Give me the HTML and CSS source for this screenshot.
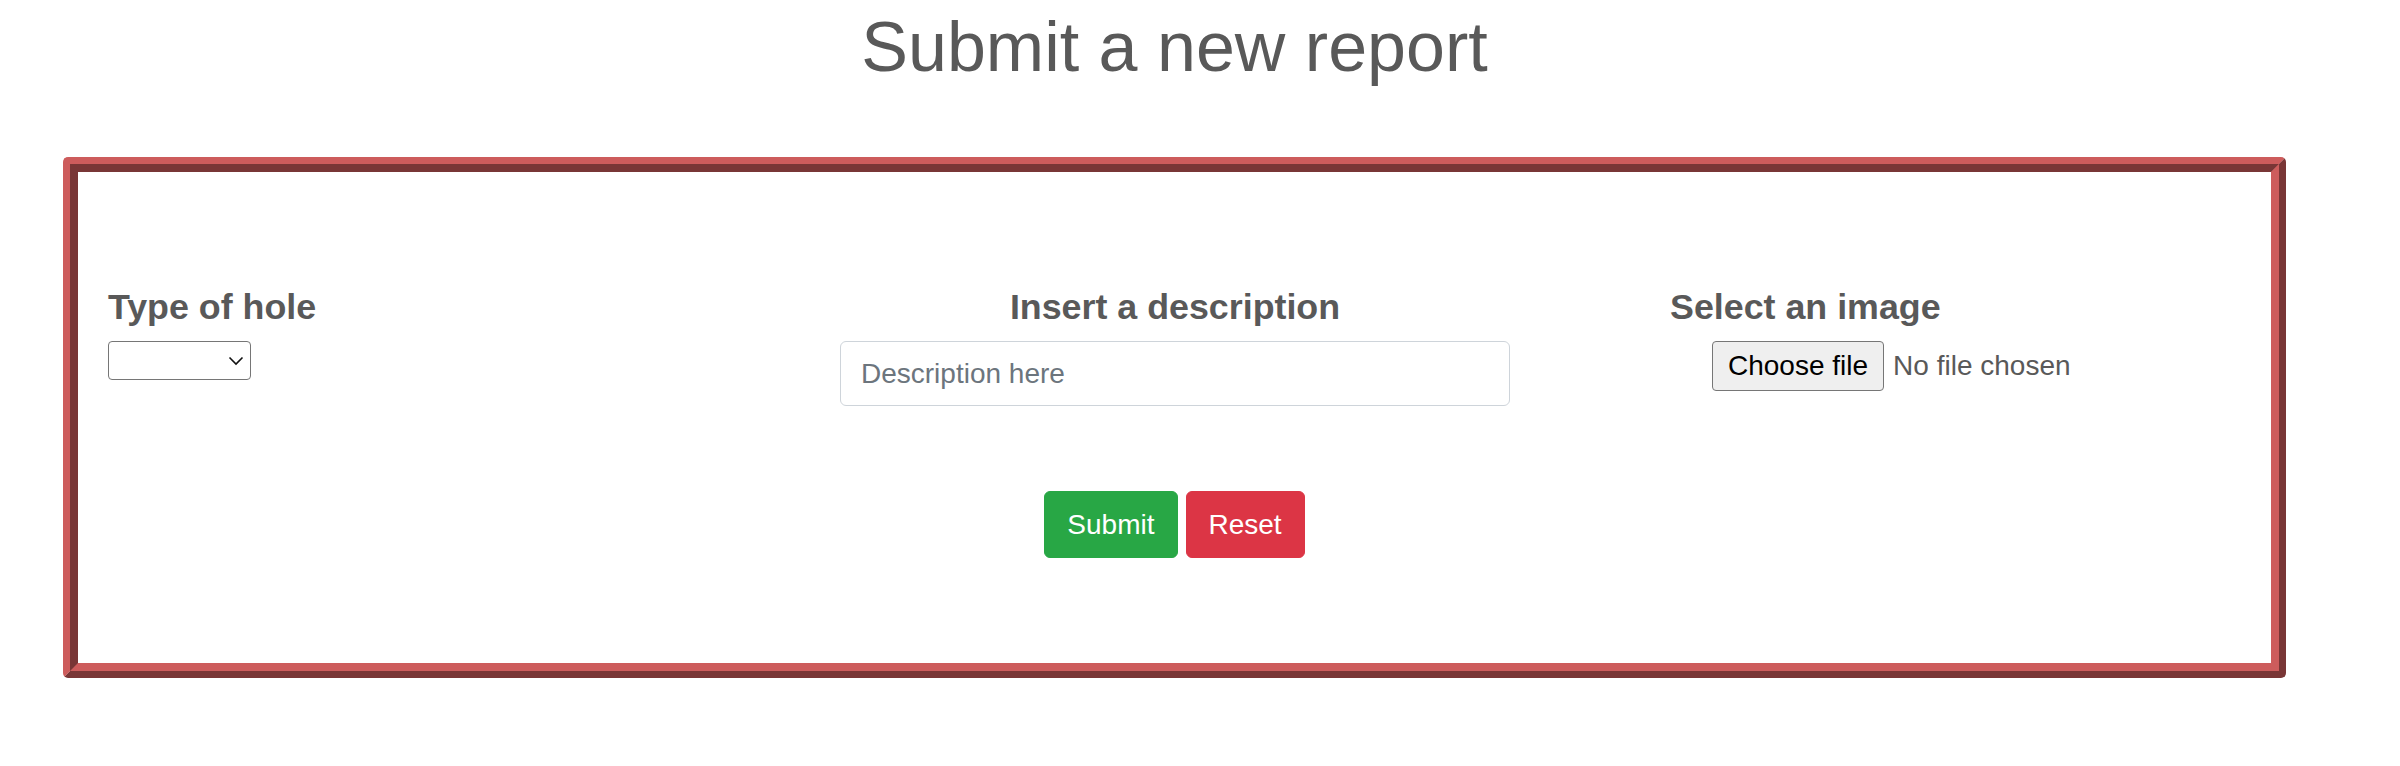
FILE: index.html
```html
<!DOCTYPE html>
<html lang="en">
<head>
<meta charset="utf-8">
<title>Submit a new report</title>
<link rel="stylesheet" href="styles.css">
</head>
<body>
<main class="page">
  <h1 class="title">Submit a new report</h1>
  <form class="report-box">
    <div class="fields">
      <div class="col col-type">
        <h5 class="field-title">Type of hole</h5>
        <span class="select-wrap">
          <select class="select" aria-label="Type of hole">
            <option></option>
          </select>
          <svg class="chevron" width="16" height="10" viewBox="0 0 16 10" aria-hidden="true"><path d="M1.5 1.5 L8 8 L14.5 1.5" fill="none" stroke="#111" stroke-width="1.6"/></svg>
        </span>
      </div>
      <div class="col col-desc">
        <h5 class="field-title center">Insert a description</h5>
        <input class="text-input" type="text" placeholder="Description here">
      </div>
      <div class="col col-image">
        <h5 class="field-title">Select an image</h5>
        <label class="file">
          <input class="file-native" type="file" accept="image/*">
          <span class="file-btn">Choose file</span>
          <span class="file-name">No file chosen</span>
        </label>
      </div>
    </div>
    <div class="actions">
      <button type="submit" class="btn btn-success">Submit</button>
      <button type="reset" class="btn btn-danger">Reset</button>
    </div>
  </form>
</main>
</body>
</html>
```
FILE: styles.css
```css
* { box-sizing: border-box; }

html, body {
  margin: 0;
  padding: 0;
  background: #ffffff;
}

body {
  font-family: "Liberation Sans", Arial, Helvetica, sans-serif;
  color: #595959;
}

.page {
  padding-left: 63px;
  padding-top: 5px;
  width: 2400px;
}

.title {
  width: 2223px;
  margin: 0;
  padding: 0;
  font-size: 70px;
  line-height: 84px;
  font-weight: 400;
  text-align: center;
  color: #595959;
}

.report-box {
  margin: 68px 0 0 0;
  width: 2223px;
  height: 521px;
  border: 15px ridge #cd5c5c;
  border-radius: 5px;
  padding-top: 114px;
}

.fields {
  display: flex;
  align-items: flex-start;
}

.col-type {
  margin-left: 30px;
  width: 732px;
}

.col-desc {
  width: 670px;
}

.col-image {
  padding-left: 160px;
}

.field-title {
  margin: 0 0 12px 0;
  font-size: 35.8px;
  line-height: 43px;
  font-weight: 700;
  color: #595959;
  white-space: nowrap;
}

.field-title.center {
  text-align: center;
}

.select-wrap {
  position: relative;
  display: inline-block;
  width: 143px;
  height: 39px;
  vertical-align: top;
}

.select {
  -webkit-appearance: none;
  appearance: none;
  display: block;
  width: 143px;
  height: 39px;
  margin: 0;
  border: 1px solid #767676;
  border-radius: 4px;
  background: #ffffff;
  font-family: inherit;
  font-size: 24px;
}

.chevron {
  position: absolute;
  right: 7px;
  top: 15px;
  pointer-events: none;
}

.text-input {
  display: block;
  width: 670px;
  height: 65px;
  margin: 1px 0 0 0;
  padding: 0 20px;
  border: 1px solid #ced4da;
  border-radius: 6px;
  background: #ffffff;
  font-family: inherit;
  font-size: 28px;
  line-height: 42px;
  color: #495057;
  outline: none;
}

.text-input::placeholder {
  color: #6c757d;
  opacity: 1;
}

.file {
  display: flex;
  align-items: center;
  margin: 1px 0 0 42px;
  cursor: pointer;
}

.file-native {
  display: none;
}

.file-btn {
  display: inline-block;
  height: 50px;
  padding: 0 15px;
  border: 1px solid #767676;
  border-radius: 4px;
  background: #efefef;
  color: #000000;
  font-size: 28px;
  line-height: 48px;
  white-space: nowrap;
}

.file-name {
  margin-left: 9px;
  font-size: 28px;
  line-height: 48px;
  color: #595959;
  white-space: nowrap;
}

.actions {
  display: flex;
  justify-content: center;
  gap: 8px;
  margin-top: 85px;
}

.btn {
  height: 67px;
  padding: 0 22px;
  border: 1px solid transparent;
  border-radius: 6px;
  font-family: inherit;
  font-size: 28px;
  line-height: 65px;
  color: #ffffff;
  cursor: pointer;
}

.btn-success {
  background: #28a745;
  border-color: #28a745;
}

.btn-danger {
  background: #dc3545;
  border-color: #dc3545;
}
```
